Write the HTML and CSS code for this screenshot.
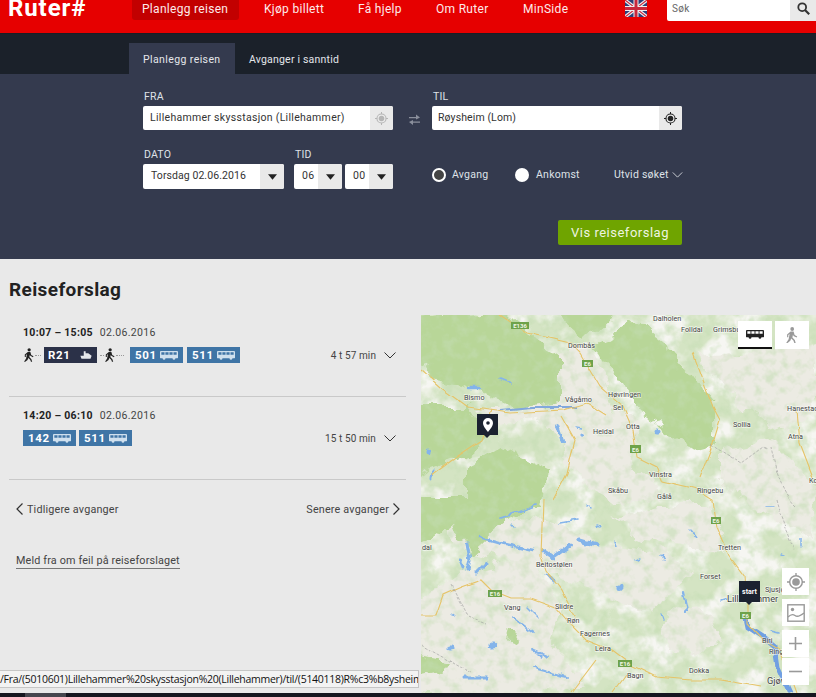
FILE: index.html
```html
<!DOCTYPE html>
<html lang="no">
<head>
<meta charset="utf-8">
<title>Ruter# - Reiseforslag</title>
<link rel="stylesheet" href="styles.css">
</head>
<body>
<svg class="defs" width="0" height="0" aria-hidden="true">
  <defs>
    <symbol id="walk" viewBox="0 0 14 16"><circle cx="7.2" cy="2" r="1.9"/><path d="M5.6 4.6h3l1 3.4 2.6 1.4-.6 1.1-3.1-1.5-.5-1.4-.6 2.8 2.4 2.6.9 2.9H9.3l-.9-2.5-2.2-2-.9 2.4L2.600 16H1.200l2.400-3.800 1-5.200-1.300 1v2.300H2.100V7.400z"/></symbol>
    <symbol id="bus" viewBox="0 0 20 10"><path d="M1 0h18a1 1 0 0 1 1 1v6.500a.5.500 0 0 1-.5.500H.5a.5.500 0 0 1-.5-.5V1a1 1 0 0 1 1-1zM1.500 1.500v2.800h3.500V1.500zm4.500 0v2.800h3.500V1.500zm4.500 0v2.800H14V1.500zm4.500 0v2.800h3.500V1.500z" fill-rule="evenodd"/><circle cx="4.500" cy="8.300" r="1.500"/><circle cx="15.500" cy="8.300" r="1.500"/></symbol>
    <symbol id="boat" viewBox="0 0 16 10"><path d="M5 0h2.500v2.500H11L15.500 6 14 10H2L.5 6H5z"/></symbol>
    <symbol id="target" viewBox="0 0 16 16"><circle cx="8" cy="8" r="3.400"/><circle cx="8" cy="8" r="5.600" fill="none" stroke="currentColor" stroke-width="1.300"/><path d="M7.400 0h1.200v2.600H7.400zM7.400 13.400h1.200V16H7.400zM0 7.400h2.600v1.200H0zM13.400 7.400H16v1.200h-2.600z"/></symbol>
    <symbol id="down" viewBox="0 0 12 7"><path d="M.5.500 6 6 11.500.5" fill="none" stroke="currentColor" stroke-width="1"/></symbol>
    <symbol id="caret" viewBox="0 0 10 6"><path d="M0 0h10L5 6z"/></symbol>
  </defs>
</svg>

<div class="page">
  <header class="topbar">
    <a class="logo">Ruter#</a>
    <nav class="mainnav">
      <a class="navitem active">Planlegg reisen</a>
      <a class="navitem kjop">Kjøp billett</a>
      <a class="navitem hjelp">Få hjelp</a>
      <a class="navitem om">Om Ruter</a>
      <a class="navitem min">MinSide</a>
    </nav>
    <svg class="flag" viewBox="0 0 22 17" aria-label="English">
      <rect width="22" height="17" fill="#2a3f7a"/>
      <path d="M0 0 22 17M22 0 0 17" stroke="#eee" stroke-width="3.400"/>
      <path d="M0 0 22 17M22 0 0 17" stroke="#c8283c" stroke-width="1.100"/>
      <path d="M11 0v17M0 8.500h22" stroke="#eee" stroke-width="5"/>
      <path d="M11 0v17M0 8.500h22" stroke="#c8283c" stroke-width="3"/>
    </svg>
    <div class="search">
      <span class="searchtext">Søk</span>
      <span class="searchbtn">
        <svg width="13" height="13" viewBox="0 0 13 13"><circle cx="5.200" cy="5.200" r="3.900" fill="none" stroke="#333" stroke-width="1.800"/><path d="m8 8 4.200 4.200" stroke="#333" stroke-width="2.200"/></svg>
      </span>
    </div>
  </header>

  <div class="tabs">
    <a class="tab current">Planlegg reisen</a>
    <a class="tab">Avganger i sanntid</a>
  </div>

  <section class="form">
    <div class="row places">
      <div class="field">
        <label class="lbl">FRA</label>
        <div class="input place">
          <span class="val">Lillehammer skysstasjon (Lillehammer)</span>
          <span class="addon faint"><svg class="targeticon"><use href="#target"/></svg></span>
        </div>
      </div>
      <svg class="swap" viewBox="0 0 11 11"><path d="M0 3h7V.500L11 3.500 7 5.500V4.200H0zM11 7.600H4V6L0 8l4 3V8.800h7z" fill="#8a8f9c"/></svg>
      <div class="field">
        <label class="lbl">TIL</label>
        <div class="input place dest">
          <span class="val">Røysheim (Lom)</span>
          <span class="addon"><svg class="targeticon"><use href="#target"/></svg></span>
        </div>
      </div>
    </div>

    <div class="row when">
      <div class="field">
        <label class="lbl">DATO</label>
        <div class="input date">
          <span class="val">Torsdag 02.06.2016</span>
          <span class="addon"><svg class="caret"><use href="#caret"/></svg></span>
        </div>
      </div>
      <div class="field time">
        <label class="lbl">TID</label>
        <div class="pair">
          <div class="input small"><span class="val">06</span><span class="addon"><svg class="caret"><use href="#caret"/></svg></span></div>
          <div class="input small"><span class="val">00</span><span class="addon"><svg class="caret"><use href="#caret"/></svg></span></div>
        </div>
      </div>
      <div class="options">
        <span class="radio checked"></span><span class="opt avgang">Avgang</span>
        <span class="radio"></span><span class="opt ankomst">Ankomst</span>
        <span class="opt utvid">Utvid søket <svg class="chev"><use href="#down"/></svg></span>
      </div>
    </div>

    <div class="actions"><button class="go">Vis reiseforslag</button></div>
  </section>

  <main class="content">
    <section class="results">
      <h1 class="title">Reiseforslag</h1>

      <article class="trip first">
        <div class="times"><b>10:07 – 15:05</b><span class="date-s">02.06.2016</span></div>
        <div class="legs">
          <div class="chips">
            <svg class="walker"><use href="#walk"/></svg><span class="dots d1"></span>
            <span class="chip dark">R21<svg class="mode boat"><use href="#boat"/></svg></span>
            <span class="dots d2"></span><svg class="walker"><use href="#walk"/></svg><span class="dots d3"></span>
            <span class="chip">501<svg class="mode"><use href="#bus"/></svg></span>
            <span class="chip after">511<svg class="mode"><use href="#bus"/></svg></span>
          </div>
          <div class="dur">4 t 57 min<svg class="chev big"><use href="#down"/></svg></div>
        </div>
      </article>

      <article class="trip second">
        <div class="times"><b>14:20 – 06:10</b><span class="date-s">02.06.2016</span></div>
        <div class="legs">
          <div class="chips">
            <span class="chip">142<svg class="mode"><use href="#bus"/></svg></span>
            <span class="chip">511<svg class="mode"><use href="#bus"/></svg></span>
          </div>
          <div class="dur">15 t 50 min<svg class="chev big"><use href="#down"/></svg></div>
        </div>
      </article>

      <div class="pager">
        <a class="pg"><svg class="arrow" viewBox="0 0 7 12"><path d="M6.500.500 1 6l5.500 5.500" fill="none" stroke="#333" stroke-width="1.200"/></svg>Tidligere avganger</a>
        <a class="pg">Senere avganger<svg class="arrow" viewBox="0 0 7 12"><path d="M.500.500 6 6 .500 11.500" fill="none" stroke="#333" stroke-width="1.200"/></svg></a>
      </div>
      <a class="report">Meld fra om feil på reiseforslaget</a>
    </section>

    <section class="map">
      <svg class="mapart" viewBox="0 0 395 378" width="395" height="378">
        <defs>
          <filter id="rough" x="-5%" y="-5%" width="110%" height="110%">
            <feTurbulence type="fractalNoise" baseFrequency="0.045" numOctaves="4" seed="4"/>
            <feDisplacementMap in="SourceGraphic" scale="22" xChannelSelector="R" yChannelSelector="G"/>
            <feGaussianBlur stdDeviation="0.700"/>
          </filter>
          <filter id="mottle" x="0" y="0" width="100%" height="100%">
            <feTurbulence type="fractalNoise" baseFrequency="0.035" numOctaves="4" seed="7"/>
            <feColorMatrix values="0 0 0 0 .925  0 0 0 0 .92  0 0 0 0 .89  4 0 0 0 -1.700"/>
          </filter>
          <filter id="grain" x="0" y="0" width="100%" height="100%">
            <feTurbulence type="fractalNoise" baseFrequency="0.09" numOctaves="3" seed="21"/>
            <feColorMatrix values="0 0 0 0 .55  0 0 0 0 .72  0 0 0 0 .45  3 0 0 0 -1.350"/>
          </filter>
          <filter id="wobble" x="-5%" y="-5%" width="110%" height="110%">
            <feTurbulence type="fractalNoise" baseFrequency="0.1" numOctaves="3" seed="12"/>
            <feDisplacementMap in="SourceGraphic" scale="7" xChannelSelector="R" yChannelSelector="G"/>
            <feGaussianBlur stdDeviation="0.300"/>
          </filter>
          <filter id="bend" x="-5%" y="-5%" width="110%" height="110%">
            <feTurbulence type="fractalNoise" baseFrequency="0.06" numOctaves="2" seed="3"/>
            <feDisplacementMap in="SourceGraphic" scale="5" xChannelSelector="R" yChannelSelector="G"/>
          </filter>
        </defs>
        <rect width="395" height="378" fill="#d4e4c3"/>
        <rect width="395" height="378" filter="url(#mottle)"/>
        <g filter="url(#rough)" fill="#ecebe3">
          <path d="M130 40 170 30 190 90 215 110 210 150 240 185 190 190 150 150 120 105 75 110 60 95 100 95z"/>
          <path d="M275 40 395 30 395 85 365 120 325 95 295 65z"/>
          <path d="M300 135 350 125 395 170 390 225 330 190 300 170z"/>
          <path d="M-5 290 40 255 110 245 140 290 130 330 165 370 70 385 -5 380z"/>
          <path d="M20 195 60 200 120 205 180 225 240 235 270 255 230 300 180 280 130 255 40 235z"/>
          <path d="M190 205 240 190 290 190 300 240 270 230 220 225z"/>
          <path d="M255 290 290 300 300 330 250 335 240 310z"/>
        </g>
        <g filter="url(#rough)" fill="#b8d698">
          <path d="M-5 2 80 -5 106 18 140 38 140 88 93 94 43 72 13 66 -5 52z"/>
          <path d="M133 -5 195 -5 165 24z"/>
          <path d="M173 32 213 5 253 38 293 92 293 128 273 134 217 95 210 82z"/>
          <path d="M-5 92 50 92 70 118 43 142 -5 158z"/>
          <path d="M80 132 127 155 123 190 47 190 47 152z"/>
          <path d="M-5 185 115 185 75 215 48 240 35 205 -5 235z"/>
          <path d="M-5 338 30 345 20 360 -5 365z"/>
          <path d="M85 315 100 322 97 330 82 325z"/>
        </g>
        <rect width="395" height="378" filter="url(#grain)" opacity=".55"/>
        <g fill="none" stroke="#84b4ea" stroke-linecap="round" filter="url(#wobble)">
          <path d="M59 222 80 228 99 232 112 235" stroke-width="2.500"/>
          <path d="M122 235 132 242 149 230" stroke-width="4"/>
          <path d="M79 202 98 197 116 190" stroke-width="1.800"/>
          <path d="M46 228 49 245 46 256M39 245 42 252" stroke-width="3"/>
          <path d="M56 258 66 248" stroke-width="3"/>
          <path d="M159 225 176 230" stroke-width="5"/>
          <path d="M139 208 156 205" stroke-width="1.600"/>
          <path d="M126 260 132 267" stroke-width="3"/>
          <path d="M262 278 266 296" stroke-width="2.200"/>
          <path d="M92 302 112 317" stroke-width="1.800"/>
          <path d="M106 293 116 303" stroke-width="1.500"/>
          <path d="M112 335 129 342" stroke-width="2"/>
          <path d="M112 353 130 358 146 362" stroke-width="2"/>
          <path d="M44 363 66 363" stroke-width="3"/>
          <path d="M46 72 59 72" stroke-width="2.500"/>
          <path d="M79 63 91 68" stroke-width="1.600"/>
          <path d="M136 110 141 125" stroke-width="4"/>
          <path d="M12 155 11 165" stroke-width="3"/>
          <path d="M160 120l3-1M155 113l6 1M118 340l2 1M240 240l4 6M270 215l6 8M345 192h6M360 240l4 1M380 225v6M215 245l4-2M195 225l2 6M165 190l3 3M300 285l6-2M350 315l8 2M240 298l2 6M176 210l3 1M90 210l3 3M30 300l3 2" stroke-width="1.500"/>
          <path d="M199 272v.500M29 333h2M71 330h1M236 116h1M7 137v1" stroke-width="5"/>
        </g>
        <g fill="none" filter="url(#bend)">
          <path d="M79 95 112 92 156 92" stroke="#82a8dc" stroke-width="2"/>
          <path d="M324 298 327 312 342 322 354 332 357 352 369 378" stroke="#6f9fe2" stroke-width="5"/>
          <g stroke="#e6c468" stroke-width="1.100">
            <path d="M79 0 106 18 149 28 159 38 179 72 202 92 212 115 216 142 236 152 242 167 276 175 292 185 296 212 309 242 324 262 326 288 326 308 342 325 359 335 375 378"/>
            <path d="M0 300H15L22 280 40 272 60 265 70 275 90 283 110 283 135 292 150 310 165 325 190 335 210 350 235 362 270 365 300 365 340 372"/>
            <path d="M0 55 19 72 46 92 89 98 142 95 166 88 185 100"/>
            <path d="M122 185 120 240 125 255 140 275 155 305"/>
            <path d="M272 38 292 92 299 105 292 128 279 162"/>
            <path d="M141 102 154 125 146 158 132 185"/>
            <path d="M376 95 379 128 392 162"/>
            <path d="M70 95 60 125 30 145 10 160"/>
            <path d="M205 360 192 378M175 345 150 378"/>
          </g>
          <path d="M290 130l30 18 22-16 4 2M350 132c5 30 15 50 25 60M0 330l50 28M30 270l15 30 20 8M355 185c5 20 10 30 18 50" stroke="#9a9a9a" stroke-width=".6" stroke-dasharray="3 1.500"/>
        </g>
        <g class="shields">
          <g><rect x="90" y="7" width="18" height="7"/><text x="99" y="13">E136</text></g>
          <g><rect x="161" y="45" width="11" height="7"/><text x="166.500" y="51">E6</text></g>
          <g><rect x="209" y="130" width="11" height="8"/><text x="214.500" y="136.500">E6</text></g>
          <g><rect x="290" y="202" width="10" height="7"/><text x="295" y="208">E6</text></g>
          <g><rect x="67" y="275" width="14" height="7"/><text x="74" y="281">E16</text></g>
          <g><rect x="319" y="297" width="11" height="7"/><text x="324.500" y="303">E6</text></g>
          <g><rect x="197" y="345" width="14" height="7"/><text x="204" y="351">E16</text></g>
        </g>
        <g class="labels">
          <text x="232" y="6">Dalholen</text><text x="260" y="17">Folldal</text><text x="292" y="17">Grimsbu</text>
          <text x="147" y="33">Dombås</text><text x="187" y="82">Høvringen</text><text x="144" y="87">Vågåmo</text>
          <text x="43" y="85">Bismo</text><text x="192" y="95">Sel</text><text x="205" y="114">Otta</text>
          <text x="172" y="119">Heidal</text><text x="312" y="112">Sollia</text><text x="366" y="96">Hanestad</text>
          <text x="367" y="124">Atna</text><text x="228" y="162">Vinstra</text><text x="187" y="178">Skåbu</text>
          <text x="236" y="184">Gålå</text><text x="276" y="178">Ringebu</text><text x="388" y="168">Ko</text>
          <text x="1" y="235">dal</text><text x="297" y="235">Tretten</text><text x="115" y="252">Beitostølen</text>
          <text x="279" y="264">Forset</text><text x="344" y="277">Sjusjøen</text>
          <text class="big" x="306" y="287">Lillehammer</text>
          <text x="83" y="295">Vang</text><text x="134" y="294">Slidre</text><text x="146" y="308">Røn</text>
          <text x="159" y="321">Fagernes</text><text x="174" y="336">Leira</text><text x="206" y="363">Bagn</text>
          <text x="268" y="358">Dokka</text><text x="341" y="328">Biri</text><text x="348" y="339">Ring</text>
          <text class="big" x="346" y="369">Gjøvik</text>
        </g>
      </svg>

      <div class="marker stop">
        <svg width="10" height="14" viewBox="0 0 10 14"><path d="M5 0a5 5 0 0 1 5 5c0 3.500-5 9-5 9S0 8.500 0 5a5 5 0 0 1 5-5zm0 3.200a1.800 1.800 0 1 0 0 3.600 1.800 1.800 0 0 0 0-3.600z" fill="#fff" fill-rule="evenodd"/></svg>
      </div>
      <div class="marker begin">start</div>

      <div class="modes">
        <span class="mbtn on"><svg class="mbus"><use href="#bus"/></svg></span>
        <span class="mbtn"><svg class="mwalk"><use href="#walk"/></svg></span>
      </div>
      <div class="tools">
        <span class="tool"><svg class="tooltarget"><use href="#target"/></svg></span>
        <span class="tool"><svg width="18" height="18" viewBox="0 0 18 18"><rect x=".8" y=".8" width="16.400" height="16.400" fill="none" stroke="#999" stroke-width="1.400"/><circle cx="5.500" cy="5.500" r="1.700" fill="#999"/><path d="M1 13c3-3 5-3 7-1.500s4 1.500 9-2.500" fill="none" stroke="#999" stroke-width="1.300"/></svg></span>
        <div class="zoom">
          <span class="tool z"><svg width="13" height="13" viewBox="0 0 13 13"><path d="M6.500 0v13M0 6.500h13" stroke="#999" stroke-width="1.600"/></svg></span>
          <span class="tool z"><svg width="13" height="3" viewBox="0 0 13 3"><path d="M0 1.500h13" stroke="#999" stroke-width="1.600"/></svg></span>
        </div>
      </div>
    </section>
  </main>

  <footer class="bottom"><span class="taskbtn"></span></footer>
</div>

<div class="status">/Fra/(5010601)Lillehammer%20skysstasjon%20(Lillehammer)/til/(5140118)R%c3%b8ysheim%20(Lom)</div>
</body>
</html>
```
FILE: styles.css
```css
* { box-sizing: border-box; }
html, body { margin: 0; padding: 0; height: 697px; overflow: hidden; }
body { font-family: "Roboto", "Liberation Sans", sans-serif; font-size: 11px; letter-spacing: .3px; background: #e9e9e9; color: #333; }
.defs { position: absolute; }
.page { width: 816px; height: 697px; display: flex; flex-direction: column; }

/* Top bar */
.topbar { height: 34px; flex: none; background: #e60000; border-bottom: 1px solid #1a1c24; display: flex; align-items: flex-start; position: relative; }
.logo { width: 132px; padding-left: 8px; margin-top: -6px; font-size: 24px; line-height: 28px; font-weight: 700; color: #fff; letter-spacing: .9px; }
.mainnav { display: flex; width: 493px; }
.navitem { height: 20px; line-height: 18px; font-size: 12px; color: #fdeaea; letter-spacing: .3px; white-space: nowrap; }
.navitem.active { width: 107px; padding-left: 10px; background: #c20000; border-radius: 0 0 3px 3px; }
.kjop { margin-left: 25px; width: 94px; }
.hjelp { width: 78px; }
.om { width: 87px; }
.flag { width: 22px; height: 17px; flex: none; }
.search { margin-left: 20px; width: 149px; height: 21px; background: #fff; display: flex; justify-content: space-between; border-radius: 0 0 0 2px; }
.searchtext { padding-left: 5px; line-height: 17px; color: #666; font-size: 10px; }
.searchbtn { width: 26px; background: #e9e9e9; display: flex; align-items: flex-start; justify-content: center; padding-top: 2px; }

/* Tabs */
.tabs { height: 40px; flex: none; background: #1b212a; padding: 9px 0 0 129px; display: flex; }
.tab { height: 31px; line-height: 33px; padding: 0 14px; color: #e4e6ea; font-size: 10.500px; letter-spacing: .2px; white-space: nowrap; }
.tab.current { width: 106px; background: #343a4e; letter-spacing: .4px; }

/* Search form */
.form { height: 185px; flex: none; background: #343a4e; padding: 16px 0 0 143px; color: #e6e8ec; }
.row { display: flex; }
.places { align-items: flex-start; }
.when { margin-top: 18px; align-items: flex-start; }
.field { display: flex; flex-direction: column; }
.lbl { height: 12px; line-height: 14px; font-size: 10.500px; padding-left: 1px; color: #dfe2e8; letter-spacing: .2px; }
.input { margin-top: 4px; height: 24px; background: #fff; border-radius: 2px; display: flex; align-items: stretch; justify-content: space-between; color: #333; overflow: hidden; }
.place { width: 250px; }
.val { line-height: 24px; padding-left: 7px; font-size: 10.500px; white-space: nowrap; }
.dest .val { padding-left: 6px; letter-spacing: .1px; }
.addon { width: 23px; background: #e9e9e9; display: flex; align-items: center; justify-content: center; color: #222; }
.addon.faint { color: #b5b5b5; fill: #b5b5b5; }
.targeticon { width: 13px; height: 13px; fill: currentColor; }
.swap { width: 11px; height: 11px; margin: 24px 12px 0 16px; flex: none; }
.date { width: 141px; height: 25px; }
.date .val { padding-left: 8px; letter-spacing: .07px; }
.date .addon, .small .addon { width: 24px; }
.caret { width: 9px; height: 6px; fill: #222; }
.time { margin-left: 10px; }
.pair { display: flex; gap: 3px; }
.small { width: 48px; height: 25px; }
.small .val { padding-left: 8px; }
.small .addon { width: 24px; }
.options { margin-left: 39px; margin-top: 14px; height: 25px; display: flex; align-items: center; font-size: 10.500px; letter-spacing: .25px; }
.radio { width: 14px; height: 14px; border-radius: 50%; background: #fff; flex: none; }
.radio.checked { background: #444; border: 2.500px solid #fff; }
.opt { color: #dfe2e8; white-space: nowrap; }
.avgang { margin-left: 6px; width: 63px; }
.ankomst { margin-left: 7px; width: 78px; }
.utvid { display: flex; align-items: center; gap: 3px; }
.chev { width: 11px; height: 6px; color: #dfe2e8; }
.actions { margin-top: 31px; width: 539px; display: flex; justify-content: flex-end; }
.go { width: 124px; height: 25px; border: 0; border-radius: 2px; background: #6fa400; color: #eef5e0; font: inherit; font-size: 13px; letter-spacing: .5px; padding: 0; }

/* Content */
.content { flex: 1; min-height: 0; display: flex; background: #e9e9e9; }
.results { width: 421px; padding: 0 15px 0 9px; flex: none; }
.title { margin: 21px 0 0; height: 20px; line-height: 20px; font-size: 19px; font-weight: 700; color: #222; letter-spacing: .38px; }
.trip { padding-left: 14px; border-bottom: 1px solid #c9c9c9; }
.trip.first { height: 97px; padding-top: 26px; }
.trip.second { height: 83px; padding-top: 12px; }
.times { height: 14px; line-height: 14px; font-size: 10.500px; color: #222; }
.times b { font-weight: 700; letter-spacing: .3px; }
.date-s { margin-left: 7px; color: #444; }
.legs { margin-top: 7px; height: 16px; display: flex; justify-content: space-between; align-items: center; padding-right: 10px; }
.chips { display: flex; align-items: center; gap: 3px; }
.walker { width: 12px; height: 14px; fill: #222; flex: none; }
.dots { display: block; height: 1px; border-top: 1px dotted #999; flex: none; }
.d1 { width: 6px; margin-left: -3px; }
.d2 { width: 4px; margin-right: -3px; }
.d3 { width: 8px; margin-left: -3px; margin-right: 3px; }
.chip { width: 53px; height: 16px; padding: 0 5px; background: #3f75a6; color: #fff; font-weight: 700; font-size: 11.500px; line-height: 16px; display: flex; align-items: center; justify-content: space-between; letter-spacing: .6px; }
.chip.after { margin-left: 1px; }
.chip.dark { background: #2b3148; padding-left: 4px; }
.mode { width: 18px; height: 9px; fill: #cfe0ee; }
.mode.boat { width: 12px; height: 8px; fill: #e4e6ea; margin-right: 0; }
.dur { display: flex; align-items: center; gap: 8px; color: #444; font-size: 10px; letter-spacing: .1px; }
.chev.big { width: 12px; height: 7px; color: #333; }

.pager { margin: 22px 0 0 7px; height: 14px; display: flex; justify-content: space-between; color: #444; padding-right: 6px; }
.pg { display: flex; align-items: center; gap: 4px; font-size: 10.800px; letter-spacing: .17px; }
.arrow { width: 7px; height: 12px; }
.report { display: inline-block; margin: 38px 0 0 7px; line-height: 14px; font-size: 10.800px; letter-spacing: .15px; color: #444; border-bottom: 1px solid #777; }

/* Map */
.map { flex: 1; position: relative; margin-top: 56px; overflow: hidden; background: #d3e3c2; }
.mapart { display: block; }
.labels text { font-family: "Roboto", sans-serif; font-size: 7.200px; letter-spacing: .05px; fill: #444; stroke: #fff; stroke-width: 1.300px; paint-order: stroke; stroke-opacity: .65; }
.labels text.big { font-size: 9.200px; }
.shields rect { fill: #6ea24a; }
.shields text { font-family: "Roboto", sans-serif; font-size: 6px; font-weight: 700; fill: #f0f6e6; text-anchor: middle; letter-spacing: 0; }
.marker { position: absolute; width: 21px; height: 21px; background: #1b2230; color: #fff; display: flex; align-items: center; justify-content: center; }
.marker::after { content: ""; position: absolute; left: 7px; bottom: -3px; width: 0; height: 0; border-left: 3.500px solid transparent; border-right: 3.500px solid transparent; border-top: 3px solid #1b2230; }
.stop { left: 56px; top: 99px; }
.begin { left: 318px; top: 266px; font-size: 7px; font-weight: 700; letter-spacing: 0; }
.modes { position: absolute; top: 6px; left: 317px; display: flex; gap: 3px; }
.mbtn { width: 34px; height: 28px; background: #fff; display: flex; align-items: center; justify-content: center; }
.mbtn.on { border-bottom: 2px solid #111; }
.mbus { width: 18px; height: 9px; fill: #222; }
.mwalk { width: 14px; height: 16px; fill: #999; }
.tools { position: absolute; left: 361px; top: 253px; width: 27px; display: flex; flex-direction: column; gap: 4px; }
.tool { width: 27px; height: 27px; background: #fff; display: flex; align-items: center; justify-content: center; }
.tooltarget { width: 18px; height: 18px; fill: #999; color: #999; }
.zoom { display: flex; flex-direction: column; gap: 1px; }
.tool.z { height: 27px; }

/* Bottom */
.bottom { height: 4px; flex: none; background: #15161f; padding-left: 25px; }
.taskbtn { display: block; width: 41px; height: 4px; background: #45464e; }

.status { position: absolute; left: 0; top: 670px; width: 419px; height: 18px; line-height: 17px; background: #f3f3f3; border: 1px solid #c6c6c6; border-left: 0; font-family: "Open Sans", sans-serif; font-size: 10.500px; letter-spacing: -.27px; color: #111; white-space: nowrap; overflow: hidden; }
```
